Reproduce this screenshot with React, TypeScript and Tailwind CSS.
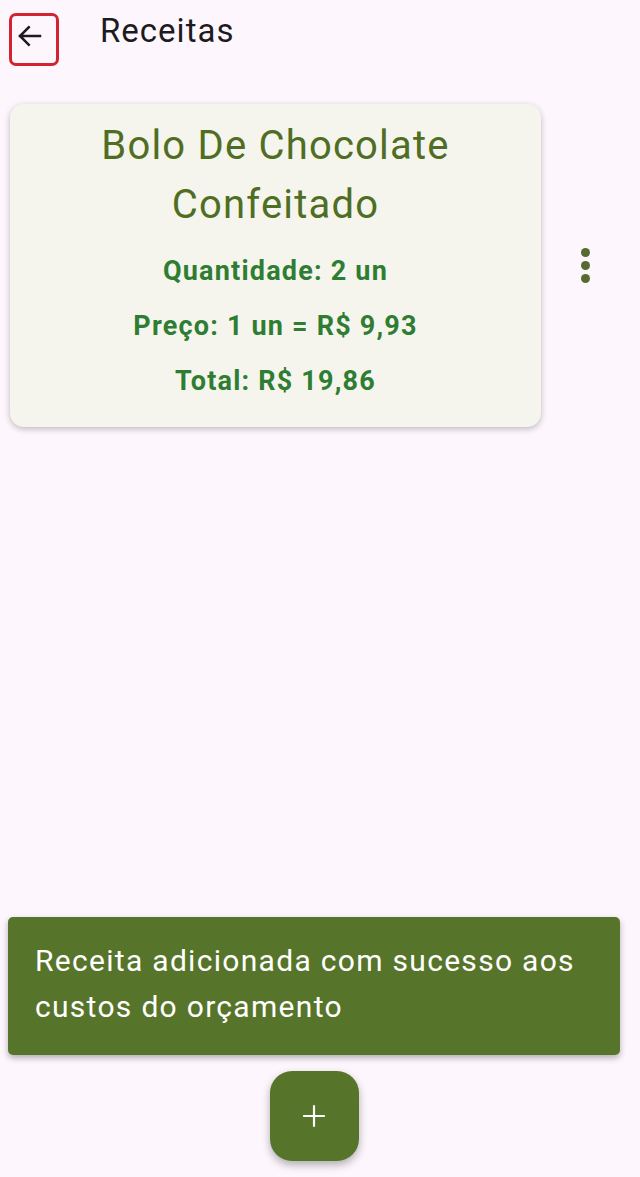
import React from 'react';

const font = { fontFamily: 'Roboto, "Noto Sans", sans-serif' };

// Top app bar with back button and page title
function Header() {
  return (
    <div className="flex items-center h-[66px] pl-[9px] pt-[13px]">
      <button className="flex items-start justify-start w-[50px] h-[53px] border-[3px] border-[#d3232e] rounded-[7px] pl-[3px] pt-[5px]">
        <svg width="30" height="30" viewBox="0 0 24 24" fill="none" stroke="#1d1b20" strokeWidth={2}>
          <path d="M20 12H4M11 5l-7 7 7 7" strokeLinecap="square" />
        </svg>
      </button>
      <h1 className="ml-[41px] -mt-[18px] text-[33px] tracking-[1px] text-[#1d1b20]">Receitas</h1>
    </div>
  );
}

interface RecipeProps {
  name: string;
  quantity: string;
  price: string;
  total: string;
}

function RecipeCard({ name, quantity, price, total }: RecipeProps) {
  return (
    <div className="flex items-center mt-[38px] pl-[10px]">
      <div className="w-[531px] h-[323px] rounded-[14px] bg-[#f5f5ee] shadow-[0_2px_6px_rgba(0,0,0,0.25)] flex flex-col items-center pt-[12px]">
        <h2 className="text-[40px] leading-[59px] tracking-[1.2px] text-[#4f6e23] text-center px-6">{name}</h2>
        <div className="flex flex-col items-center mt-[22px] gap-[25px] text-[27px] leading-[30px] tracking-[1.2px] font-bold text-[#2e7d32]">
          <p>{quantity}</p>
          <p>{price}</p>
          <p>{total}</p>
        </div>
      </div>
      <button className="ml-[40px] flex flex-col items-center gap-[4px]">
        <span className="w-[9px] h-[9px] rounded-full bg-[#556b2f]" />
        <span className="w-[9px] h-[9px] rounded-full bg-[#556b2f]" />
        <span className="w-[9px] h-[9px] rounded-full bg-[#556b2f]" />
      </button>
    </div>
  );
}

export default function App() {
  return (
    <div className="w-[640px] h-[1177px] bg-[#fdf7fd] flex flex-col overflow-hidden" style={font}>
      <Header />
      <RecipeCard
        name="Bolo De Chocolate Confeitado"
        quantity="Quantidade: 2 un"
        price="Preço: 1 un = R$ 9,93"
        total="Total: R$ 19,86"
      />
      <div className="mt-auto ml-[8px] mr-[20px] h-[138px] rounded-[5px] bg-[#57752a] shadow-[0_3px_6px_rgba(0,0,0,0.3)] px-[27px] pt-[21px]">
        <p className="text-[30px] leading-[46px] tracking-[1.3px] text-white">
          Receita adicionada com sucesso aos custos do orçamento
        </p>
      </div>
      <div className="flex justify-center ml-[8px] mr-[20px] mt-[16px] mb-[16px]">
        <button className="w-[89px] h-[90px] rounded-[22px] bg-[#57752a] shadow-[0_4px_8px_rgba(0,0,0,0.3)] flex items-center justify-center">
          <svg width="26" height="26" viewBox="0 0 24 24" stroke="white" strokeWidth={2}>
            <path d="M12 2v20M2 12h20" />
          </svg>
        </button>
      </div>
    </div>
  );
}
